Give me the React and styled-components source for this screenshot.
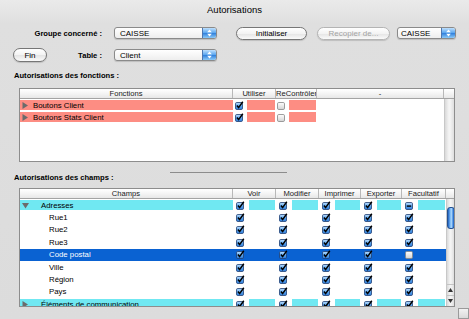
import React from 'react';
import styled, { createGlobalStyle } from 'styled-components';

const FONT = `'Liberation Sans', Arial, sans-serif`;
const SALMON = '#fd8d83';
const CYAN = '#70e8f2';

const GlobalStyle = createGlobalStyle`
  html, body {
    margin: 0;
    padding: 0;
  }
  body {
    font-family: ${FONT};
    background: #dddddd;
  }
`;

const Window = styled.div`
  width: 469px;
  height: 319px;
  display: flex;
  flex-direction: column;
  overflow: hidden;
  color: #000;
  background: linear-gradient(#eaeaea 0, #dfdfdf 24px, #dcdcdc 100%);
`;

const TitleBar = styled.div`
  height: 18px;
  flex: none;
  display: flex;
  align-items: center;
  justify-content: center;
  font-size: 9.5px;
`;

const Controls = styled.div`
  display: flex;
  flex-direction: column;
  gap: 8px;
  padding-top: 8px;
`;

const ControlRow = styled.div`
  height: 14px;
  display: flex;
  align-items: center;
`;

const LabelCell = styled.div`
  width: 89px;
  margin-left: 13px;
  display: flex;
  align-items: center;
`;

const FieldLabel = styled.span`
  margin-left: auto;
  font-weight: bold;
  font-size: 7.6px;
  white-space: nowrap;
`;

const PushButton = styled.button`
  margin-left: ${(p) => p.$ml || 0}px;
  width: ${(p) => p.$w}px;
  height: ${(p) => p.$h || 13}px;
  padding: 0;
  box-sizing: border-box;
  border: 1px solid ${(p) => (p.disabled ? '#b4b4b4' : '#767676')};
  border-radius: 7px;
  background: linear-gradient(#ffffff, #f3f3f3 50%, #e4e4e4 52%, #fafafa);
  box-shadow: 0 1px 1px rgba(0, 0, 0, 0.15);
  font: 8px ${FONT};
  color: ${(p) => (p.disabled ? '#a3a3a3' : '#000')};
`;

const Popup = styled.div`
  margin-left: ${(p) => p.$ml}px;
  width: ${(p) => p.$w}px;
  height: 12px;
  box-sizing: border-box;
  border: 1px solid #8a8a8a;
  border-radius: 3px;
  background: linear-gradient(#ffffff, #eeeeee);
  box-shadow: 0 1px 1px rgba(0, 0, 0, 0.15);
  display: flex;
  align-items: center;
  overflow: hidden;
`;

const PopupText = styled.span`
  flex: 1;
  padding-left: ${(p) => p.$pl}px;
  font-size: 8px;
  white-space: nowrap;
`;

const Stepper = styled.span`
  width: 13px;
  align-self: stretch;
  display: flex;
  align-items: center;
  justify-content: center;
  border-left: 1px solid #4d78b2;
  background: linear-gradient(#bfe0fd, #5aa6ef 48%, #2f7fdc 52%, #8ccaf8);
`;

const SectionTitle = styled.div`
  margin: ${(p) => p.$mt}px 0 0 14px;
  height: 10px;
  line-height: 10px;
  font-weight: bold;
  font-size: 7.6px;
`;

const Splitter = styled.div`
  margin: 10px 0 0 170px;
  width: 117px;
  height: 1px;
  background: #8c8c8c;
`;

const Pane = styled.div`
  margin: ${(p) => p.$mt}px 0 0 19px;
  width: 436px;
  height: ${(p) => p.$h}px;
  flex: none;
  box-sizing: border-box;
  border: 1px solid #8d8d8d;
  background: #fff;
  display: flex;
  flex-direction: column;
  overflow: hidden;
`;

const Head = styled.div`
  display: grid;
  grid-template-columns: ${(p) => p.$cols};
  flex: none;
  height: 10px;
  box-sizing: border-box;
  border-bottom: 1px solid #a3a3a3;
  background: linear-gradient(#ffffff, #f4f4f4 50%, #e7e7e7);
`;

const HeadCell = styled.div`
  border-right: 1px solid #b8b8b8;
  font-size: 7.6px;
  line-height: 9px;
  text-align: center;
  color: #1a1a1a;
  white-space: nowrap;
  overflow: hidden;
  &:last-child {
    border-right: 0;
  }
`;

const Body = styled.div`
  flex: 1;
  display: flex;
  min-height: 0;
`;

const Rows = styled.div`
  flex: 1;
  overflow: hidden;
`;

const Line = styled.div`
  display: grid;
  grid-template-columns: ${(p) => p.$cols};
  height: ${(p) => p.$h}px;
  background: ${(p) => (p.$selected ? '#0a62d2' : 'transparent')};
  color: ${(p) => (p.$selected ? '#fff' : '#000')};
`;

const NameCell = styled.div`
  display: flex;
  padding: 1px 0;
  box-sizing: border-box;
  min-width: 0;
`;

const NameFill = styled.div`
  flex: 1;
  display: flex;
  align-items: center;
  padding-left: 2px;
  background: ${(p) => p.$fill || 'transparent'};
  white-space: nowrap;
  overflow: hidden;
`;

const NameText = styled.span`
  margin-left: ${(p) => p.$indent}px;
  font-size: 7.8px;
`;

const FlagCell = styled.div`
  display: flex;
  align-items: center;
  padding: 1px ${(p) => p.$pr}px 1px ${(p) => p.$pl}px;
  box-sizing: border-box;
`;

const FlagFill = styled.div`
  flex: 1;
  align-self: stretch;
  margin-left: ${(p) => p.$gap}px;
  background: ${(p) => p.$fill || 'transparent'};
`;

const Track = styled.div`
  width: ${(p) => p.$w}px;
  flex: none;
  box-sizing: border-box;
  display: flex;
  flex-direction: column;
  border-left: 1px solid #c8c8c8;
  background: linear-gradient(90deg, #d9d9d9, #f5f5f5 45%, #f2f2f2 60%, #dedede);
`;

const Thumb = styled.div`
  margin: 8px auto 0;
  width: 6px;
  height: 20px;
  border-radius: 3px;
  border: 0.5px solid #24508f;
  background: linear-gradient(90deg, #1f5fbf, #6fb2f2 35%, #b0dafc 55%, #3b85df 85%, #1d58b4);
`;

const TrackSpace = styled.div`
  flex: 1;
`;

const ArrowBox = styled.div`
  height: 10px;
  flex: none;
  display: flex;
  align-items: center;
  justify-content: center;
  border-top: 1px solid #c4c4c4;
`;

const Footer = styled.div`
  flex: 1;
  display: flex;
  justify-content: flex-end;
  align-items: flex-end;
`;

const Grip = styled.div`
  width: 11px;
  height: 11px;
  box-sizing: border-box;
  border: 1px solid #9a9a9a;
  background: linear-gradient(#f2f2f2, #dadada);
`;

const px = (arr) => arr.map((w) => `${w}px`).join(' ');

const StepArrows = () => (
  <svg width="5" height="8" viewBox="0 0 5 8">
    <polygon points="2.5,0.5 4.8,3.2 0.2,3.2" fill="#fff" />
    <polygon points="0.2,4.8 4.8,4.8 2.5,7.5" fill="#fff" />
  </svg>
);

const CheckBox = ({ state = 'on' }) => {
  const blue = state !== 'off';
  return (
    <svg width="9" height="9" viewBox="0 0 9 9" style={{ flex: 'none' }}>
      <defs>
        <linearGradient id="cbOn" x1="0" y1="0" x2="0" y2="1">
          <stop offset="0" stopColor="#c4e3ff" />
          <stop offset="0.5" stopColor="#5aa5ee" />
          <stop offset="1" stopColor="#2f7bd8" />
        </linearGradient>
        <linearGradient id="cbOff" x1="0" y1="0" x2="0" y2="1">
          <stop offset="0" stopColor="#ffffff" />
          <stop offset="1" stopColor="#d2d2d2" />
        </linearGradient>
      </defs>
      <rect
        x="0.5"
        y="1.5"
        width="7"
        height="7"
        rx="1.3"
        fill={blue ? 'url(#cbOn)' : 'url(#cbOff)'}
        stroke={blue ? '#1f3f72' : '#858585'}
        strokeWidth="0.8"
      />
      {state === 'on' && (
        <path d="M1.9 4.6 L3.6 6.6 L7.8 0.8" fill="none" stroke="#000" strokeWidth="1.5" />
      )}
      {state === 'mixed' && <rect x="1.8" y="4.4" width="4.4" height="1.4" fill="#000" />}
    </svg>
  );
};

const Disclosure = ({ open }) => (
  <svg width="7" height="7" viewBox="0 0 7 7" style={{ flex: 'none' }}>
    {open ? (
      <polygon points="0,1 7,1 3.5,6.5" fill="#6b6b6b" />
    ) : (
      <polygon points="0.5,0 6,3.5 0.5,7" fill="#6b6b6b" />
    )}
  </svg>
);

const ArrowGlyph = ({ up }) => (
  <svg width="5" height="4" viewBox="0 0 5 4">
    <polygon points={up ? '2.5,0 5,4 0,4' : '0,0 5,0 2.5,4'} fill="#333" />
  </svg>
);

const FN_COLS = [213, 43, 41, 127];
const FN_SCROLL = 10;
const functions = [
  { name: 'Boutons  Client', use: 'on', check: 'off' },
  { name: 'Boutons Stats  Client', use: 'on', check: 'off' },
];

const CH_COLS = [213, 43, 43, 42, 41, 44];
const CH_SCROLL = 8;
const fields = [
  { name: 'Adresses', group: true, open: true, fac: 'mixed' },
  { name: 'Rue1' },
  { name: 'Rue2' },
  { name: 'Rue3' },
  { name: 'Code postal', selected: true, fac: 'off' },
  { name: 'Ville' },
  { name: 'Région' },
  { name: 'Pays' },
  { name: 'Éléments de communication', group: true, open: false },
];

const FunctionsTable = () => (
  <Pane $mt={7} $h={74}>
    <Head $cols={px([...FN_COLS, FN_SCROLL])}>
      <HeadCell>Fonctions</HeadCell>
      <HeadCell>Utiliser</HeadCell>
      <HeadCell>ReContrôler</HeadCell>
      <HeadCell>-</HeadCell>
      <HeadCell />
    </Head>
    <Body>
      <Rows>
        {functions.map((f) => (
          <Line key={f.name} $cols={px(FN_COLS)} $h={12}>
            <NameCell>
              <NameFill $fill={SALMON}>
                <Disclosure />
                <NameText $indent={4}>{f.name}</NameText>
              </NameFill>
            </NameCell>
            <FlagCell $pl={2} $pr={1}>
              <CheckBox state={f.use} />
              <FlagFill $gap={3} $fill={SALMON} />
            </FlagCell>
            <FlagCell $pl={1} $pr={1}>
              <CheckBox state={f.check} />
              <FlagFill $gap={3} $fill={SALMON} />
            </FlagCell>
            <div />
          </Line>
        ))}
      </Rows>
      <Track $w={FN_SCROLL} />
    </Body>
  </Pane>
);

const FieldsTable = () => (
  <Pane $mt={5} $h={119}>
    <Head $cols={px([...CH_COLS, CH_SCROLL])}>
      <HeadCell>Champs</HeadCell>
      <HeadCell>Voir</HeadCell>
      <HeadCell>Modifier</HeadCell>
      <HeadCell>Imprimer</HeadCell>
      <HeadCell>Exporter</HeadCell>
      <HeadCell>Facultatif</HeadCell>
      <HeadCell />
    </Head>
    <Body>
      <Rows>
        {fields.map((f) => {
          const fill = f.group ? CYAN : null;
          const flags = ['on', 'on', 'on', 'on', f.fac || 'on'];
          return (
            <Line key={f.name} $cols={px(CH_COLS)} $h={12.4} $selected={f.selected}>
              <NameCell>
                <NameFill $fill={fill}>
                  {f.group && <Disclosure open={f.open} />}
                  <NameText $indent={f.group ? 12 : 27}>{f.name}</NameText>
                </NameFill>
              </NameCell>
              {flags.map((s, i) => (
                <FlagCell key={i} $pl={3} $pr={1}>
                  <CheckBox state={s} />
                  <FlagFill $gap={4} $fill={fill} />
                </FlagCell>
              ))}
            </Line>
          );
        })}
      </Rows>
      <Track $w={CH_SCROLL}>
        <Thumb />
        <TrackSpace />
        <ArrowBox>
          <ArrowGlyph up />
        </ArrowBox>
        <ArrowBox>
          <ArrowGlyph />
        </ArrowBox>
      </Track>
    </Body>
  </Pane>
);

const App = () => {
  return (
    <Window>
      <GlobalStyle />
      <TitleBar>Autorisations</TitleBar>
      <Controls>
        <ControlRow>
          <LabelCell>
            <FieldLabel>Groupe concerné :</FieldLabel>
          </LabelCell>
          <Popup $ml={12} $w={103}>
            <PopupText $pl={5}>CAISSE</PopupText>
            <Stepper>
              <StepArrows />
            </Stepper>
          </Popup>
          <PushButton $ml={19} $w={71}>
            Initialiser
          </PushButton>
          <PushButton $ml={10} $w={73} disabled>
            Recopier de...
          </PushButton>
          <Popup $ml={7} $w={59}>
            <PopupText $pl={3}>CAISSE</PopupText>
            <Stepper>
              <StepArrows />
            </Stepper>
          </Popup>
        </ControlRow>
        <ControlRow>
          <LabelCell>
            <PushButton $w={34} $h={14}>
              Fin
            </PushButton>
            <FieldLabel>Table :</FieldLabel>
          </LabelCell>
          <Popup $ml={12} $w={103}>
            <PopupText $pl={5}>Client</PopupText>
            <Stepper>
              <StepArrows />
            </Stepper>
          </Popup>
        </ControlRow>
      </Controls>
      <SectionTitle $mt={9}>Autorisations des fonctions :</SectionTitle>
      <FunctionsTable />
      <Splitter />
      <SectionTitle $mt={0}>Autorisations des champs :</SectionTitle>
      <FieldsTable />
      <Footer>
        <Grip />
      </Footer>
    </Window>
  );
};

export default App;
